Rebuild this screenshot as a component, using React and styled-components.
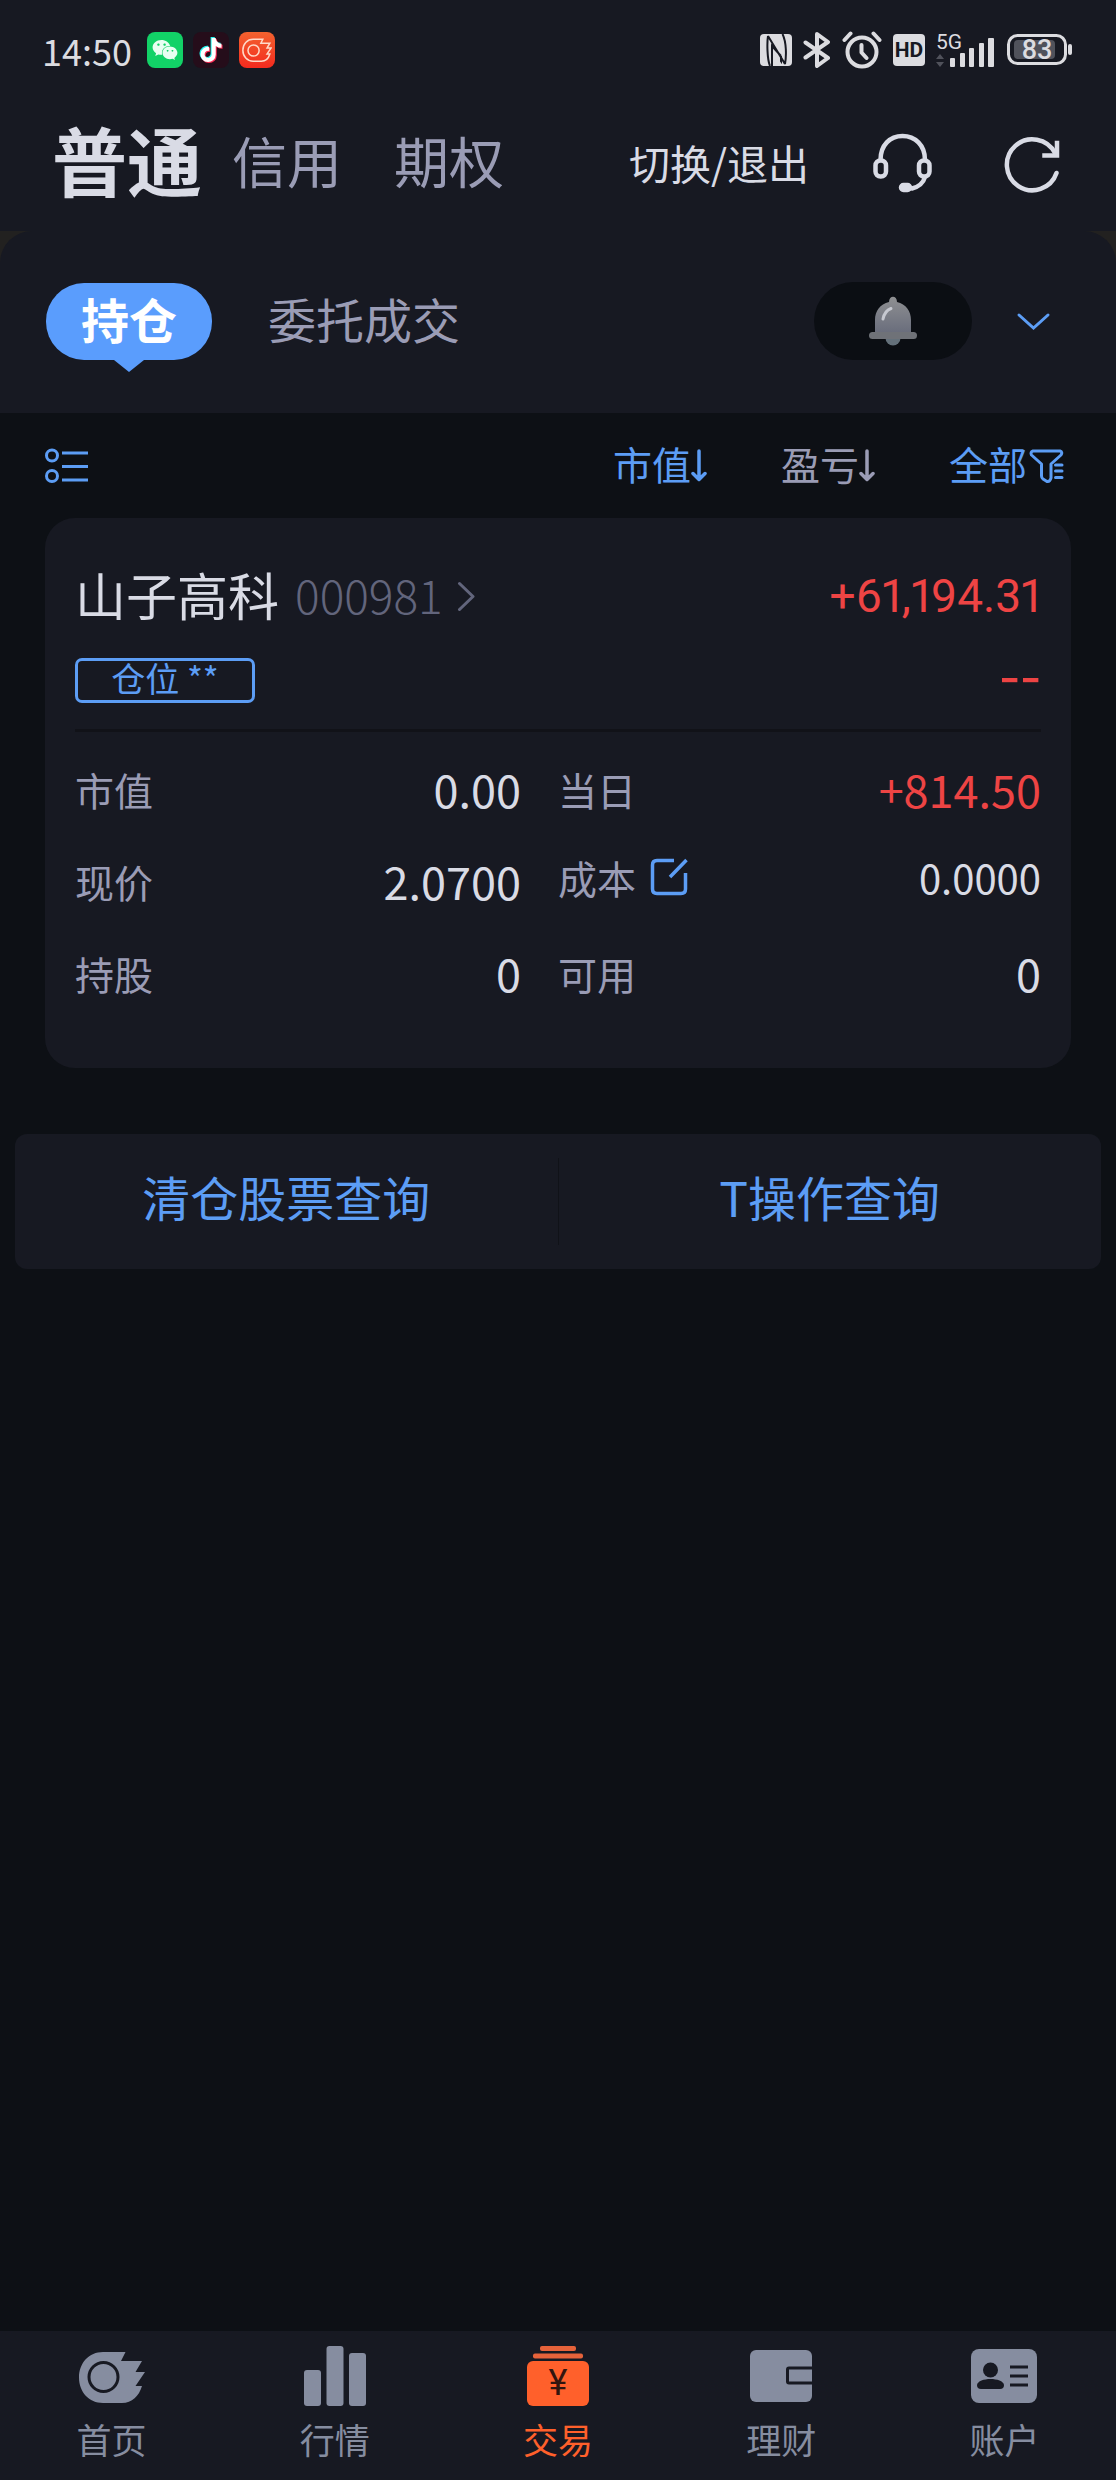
import React from "react";
import styled, { createGlobalStyle } from "styled-components";
import { FaWeixin, FaTiktok } from "react-icons/fa";

const color = {
  page: "#0d1015",
  panel: "#171922",
  corner: "#222120",
  bright: "#d9dbe5",
  muted: "#9a9cb5",
  faint: "#62657c",
  blue: "#5c9df5",
  pill: "#5a9dfd",
  red: "#ee4444",
  nav: "#868da0",
  orange: "#ff602b",
  status: "#dcdce0",
};

const GlobalStyle = createGlobalStyle`
  *, *::before, *::after { box-sizing: border-box; }
  body {
    margin: 0;
    background: ${color.page};
    font-family: "Noto Sans CJK SC", "Noto Sans", sans-serif;
  }
  button {
    margin: 0;
    padding: 0;
    border: 0;
    background: none;
    color: inherit;
    font: inherit;
    cursor: pointer;
  }
  svg { display: block; flex: none; }
`;

const Page = styled.div`
  display: flex;
  flex-direction: column;
  min-height: 100vh;
  background: ${color.page};
  color: ${color.bright};
`;

const StatusBar = styled.div`
  display: flex;
  align-items: center;
  justify-content: space-between;
  height: 100px;
  padding: 0 43px 0 42px;
  background: ${color.panel};
  color: ${color.status};
`;

const StatusGroup = styled.div`
  display: flex;
  align-items: center;
  gap: ${(p) => p.$gap}px;
`;

const Clock = styled.span`
  margin-right: 5px;
  font-size: 36px;
  line-height: 44px;
`;

const AppBadge = styled.span`
  display: flex;
  align-items: center;
  justify-content: center;
  width: 36px;
  height: 36px;
  border-radius: 8px;
  background: ${(p) => p.$fill};
  color: #e9fff2;
`;

const HdBadge = styled.span`
  width: 32px;
  height: 32px;
  border-radius: 4px;
  background: ${color.status};
  color: ${color.panel};
  font: 700 21px/32px Roboto, sans-serif;
  text-align: center;
`;

const Header = styled.header`
  display: flex;
  align-items: center;
  justify-content: space-between;
  height: 131px;
  padding: 0 51px 8px 52px;
  background: ${color.panel};
`;

const AccountTabs = styled.nav`
  display: flex;
  align-items: center;
  gap: 30px;
  padding-bottom: 5px;
`;

const AccountTab = styled.button`
  padding-right: ${(p) => (p.$active ? 0 : 22)}px;
  color: ${(p) => (p.$active ? color.bright : color.muted)};
  font-size: ${(p) => (p.$active ? 75 : 55)}px;
  font-weight: ${(p) => (p.$active ? 700 : 400)};
  line-height: 80px;
`;

const HeaderActions = styled.div`
  display: flex;
  align-items: center;
  gap: 64px;
`;

const SwitchButton = styled.button`
  font-size: 41px;
  line-height: 60px;
`;

const PanelBackdrop = styled.div`
  background: ${color.corner};
`;

const TabPanel = styled.section`
  display: flex;
  align-items: center;
  height: 182px;
  padding: 0 58px 2px 46px;
  border-radius: 32px 32px 0 0;
  background: ${color.panel};
`;

const ActiveTab = styled.button`
  position: relative;
  width: 166px;
  height: 77px;
  padding-bottom: 7px;
  border-radius: 38px;
  background: ${color.pill};
  color: #fff;
  font-size: 48px;
  font-weight: 700;
  line-height: 70px;

  &::after {
    content: "";
    position: absolute;
    top: 100%;
    left: 50%;
    margin-left: -15px;
    border: 15px solid transparent;
    border-top: 12px solid ${color.pill};
    border-bottom: 0;
  }
`;

const PlainTab = styled.button`
  margin: 0 auto 0 56px;
  padding-bottom: 7px;
  color: ${color.muted};
  font-size: 48px;
  line-height: 70px;
`;

const BellButton = styled.button`
  display: flex;
  align-items: center;
  justify-content: center;
  width: 158px;
  height: 78px;
  border-radius: 39px;
  background: #0b0e13;
`;

const ExpandButton = styled.button`
  margin-left: 38px;
`;

const FilterBar = styled.div`
  display: flex;
  align-items: center;
  gap: 74px;
  height: 105px;
  padding: 0 51px 0 44px;
`;

const ListButton = styled.button`
  margin-right: auto;
`;

const FilterButton = styled.button`
  display: flex;
  align-items: center;
  gap: ${(p) => p.$gap || 0}px;
  color: ${(p) => (p.$active ? color.blue : color.muted)};
  font-size: 39px;
  line-height: 54px;
`;

const FilterText = styled.span`
  padding-bottom: 6px;
`;

const Card = styled.article`
  margin: 0 45px;
  padding: 46px 30px 49px;
  border-radius: 30px;
  background: ${color.panel};
`;

const CardRow = styled.div`
  display: flex;
  align-items: center;
  justify-content: space-between;
`;

const StockLink = styled.a`
  display: flex;
  align-items: center;
  color: ${color.bright};
  font-size: 51px;
  line-height: 64px;
  text-decoration: none;
`;

const StockName = styled.span`
  padding-bottom: 3px;
  line-height: 61px;
`;

const StockCode = styled(StockName)`
  margin: 0 14px 0 16px;
  color: ${color.faint};
  font-size: 46px;
  font-weight: 300;
`;

const Profit = styled.span`
  color: ${color.red};
  font-family: Roboto, "Noto Sans", sans-serif;
  font-size: 46px;
  font-variant-numeric: proportional-nums;
  line-height: 64px;
`;

const TagRow = styled(CardRow)`
  height: 45px;
  margin: 30px 0 26px;
`;

const PositionTag = styled.span`
  width: 180px;
  height: 45px;
  border: 3px solid ${color.blue};
  border-radius: 7px;
  color: ${color.blue};
  font-size: 34px;
  line-height: 34px;
  text-align: center;
`;

const ProfitRate = styled.span`
  padding-bottom: 20px;
  color: ${color.red};
  font-size: 60px;
  line-height: 45px;
`;

const Metrics = styled.dl`
  display: grid;
  grid-template-columns: 1fr 1fr;
  margin: 0;
  padding-top: 11px;
  border-top: 3px solid #111218;
`;

const Metric = styled.div`
  display: flex;
  align-items: center;
  justify-content: space-between;
  height: 92px;
  padding: 0 ${(p) => (p.$left ? 37 : 0)}px ${(p) => (p.$raised ? 8 : 0)}px 0;
`;

const MetricLabel = styled.dt`
  display: flex;
  align-items: center;
  gap: 14px;
  color: ${color.muted};
  font-size: 39px;
  line-height: 56px;
`;

const MetricValue = styled.dd`
  margin: 0;
  color: ${(p) => (p.$gain ? color.red : color.bright)};
  font-size: ${(p) => (p.$small ? 40 : 45)}px;
  line-height: 56px;
`;

const QueryBar = styled.div`
  display: flex;
  align-items: center;
  height: 135px;
  margin: 66px 15px 0;
  border-radius: 12px;
  background: ${color.panel};
`;

const QueryButton = styled.button`
  flex: 1;
  height: 87px;
  padding-bottom: 10px;
  color: ${color.blue};
  font-size: 48px;
  line-height: 77px;

  & + & {
    border-left: 1px solid #101218;
  }
`;

const BottomNav = styled.nav`
  display: flex;
  margin-top: auto;
  background: ${color.panel};
`;

const NavItem = styled.a`
  display: flex;
  flex: 1;
  flex-direction: column;
  align-items: center;
  gap: 11px;
  padding: 15px 0 19px;
  color: ${(p) => (p.$active ? color.orange : color.nav)};
  font-size: 35px;
  line-height: 44px;
  text-decoration: none;
`;

const FLAME =
  "M24 0H46.500L42 9H63L56.500 20H66L56.500 34H63C60 44 53 51 43 51H24C10 51 0 40 0 25.500S10 0 24 0Z";

const TiktokLogo = () => (
  <svg width="26" height="28" viewBox="0 0 26 28">
    <FaTiktok x="0" y="1" size={24} color="#25f4ee" />
    <FaTiktok x="2" y="3" size={24} color="#fe2c55" />
    <FaTiktok x="1" y="2" size={24} color="#fff" />
  </svg>
);

const FlameOutline = () => (
  <svg width="30" height="25" viewBox="-2 -2 70 56" fill="none" stroke="#ffd9c8" strokeWidth="3.500">
    <path d={FLAME} />
    <circle cx="25" cy="26" r="13" />
  </svg>
);

const NfcIcon = () => (
  <svg width="32" height="32" viewBox="0 0 32 32" fill="none">
    <rect width="32" height="32" rx="4" fill={color.status} />
    <path d="M8 2C7 8 7 25 10 32M8 2L25 30M12 32V12L21 22M25 30C26.500 22 26.500 8 22.500 0M21 22V30" stroke={color.panel} strokeWidth="2" />
    <path d="M16.500 22.500L22.500 31H16.500Z" fill={color.status} />
  </svg>
);

const BluetoothIcon = () => (
  <svg width="28" height="36" viewBox="0 0 28 36" fill="none" stroke={color.status} strokeWidth="4" strokeLinecap="round" strokeLinejoin="round">
    <path d="M2.500 10.500L25 26L14 34V2L25 10L2.500 25.500" />
  </svg>
);

const AlarmIcon = () => (
  <svg width="40" height="38" viewBox="0 0 40 38" fill="none" stroke={color.status} strokeWidth="4" strokeLinecap="round" strokeLinejoin="round">
    <circle cx="20" cy="21" r="14.500" />
    <path d="M19.500 14V21.500L24.500 27M2.500 9L8.500 2.500M31.500 2.500L37.500 9" />
  </svg>
);

const SignalIcon = () => (
  <svg width="60" height="44" viewBox="0 -4 60 44" fill={color.status}>
    <text x="0" y="17" fontFamily="Roboto, sans-serif" fontSize="21">5G</text>
    <rect x="14" y="26" width="5" height="9" rx="1" />
    <rect x="24" y="21" width="5" height="14" rx="1" />
    <rect x="33" y="16" width="5" height="19" rx="1" />
    <rect x="43" y="11" width="5" height="24" rx="1" />
    <rect x="52" y="6" width="6" height="29" rx="1" />
    <path d="M4 22L8 27H0ZM4 35L8 30H0Z" fill="#50525b" />
  </svg>
);

const BatteryIcon = () => (
  <svg width="66" height="36" viewBox="0 -2 66 36">
    <rect x="1.500" y="1.500" width="57" height="28" rx="9" fill="none" stroke={color.status} strokeWidth="3" />
    <rect x="7" y="6" width="41" height="19" rx="4" fill="#50525b" />
    <rect x="61" y="10" width="4" height="11" rx="2" fill={color.status} />
    <text x="30" y="25" textAnchor="middle" fill={color.status} fontFamily="Roboto, sans-serif" fontSize="27" fontWeight="500">83</text>
  </svg>
);

const HeadsetIcon = () => (
  <svg width="64" height="64" viewBox="0 0 64 64" fill="none" stroke={color.bright} strokeWidth="4.500" strokeLinecap="round">
    <path d="M7.500 30C7.500 15 17 6 29.500 6S52 15 52 30M52 47C50 54 45 57 39 58.500" />
    <rect x="2.500" y="30.500" width="10.500" height="16" rx="5" />
    <rect x="46" y="30.500" width="10.500" height="16" rx="5" />
    <rect x="28" y="55" width="9" height="5" rx="2.500" fill={color.bright} />
  </svg>
);

const RefreshIcon = () => (
  <svg width="64" height="64" viewBox="0 0 64 64" fill="none" stroke={color.bright} strokeWidth="4.500" strokeLinecap="round">
    <path d="M55.500 43A25.500 25.500 0 1 1 54 23" />
    <path d="M56 13V25.500H43.500" strokeLinecap="square" />
  </svg>
);

const BellIcon = () => (
  <svg width="48" height="52" viewBox="0 0 48 52">
    <defs>
      <linearGradient id="bell" x1="0" y1="0" x2="0" y2="1">
        <stop offset="0" stopColor="#8f9092" />
        <stop offset="1" stopColor="#696d7c" />
      </linearGradient>
    </defs>
    <circle cx="24" cy="43" r="7.500" fill="#64707a" />
    <path d="M20 7C20 0 28 0 28 7C37 9 42 16 42 25V38H6V25C6 16 11 9 20 7Z" fill="url(#bell)" />
    <rect x="0" y="37" width="48" height="7" rx="3.500" fill="#6f7278" />
    <path d="M14 24C15 19 18 15 22 13.500" fill="none" stroke="#c6c8d0" strokeWidth="3" strokeLinecap="round" />
  </svg>
);

const ChevronDown = () => (
  <svg width="48" height="48" viewBox="0 0 48 48" fill="none" stroke={color.blue} strokeWidth="3" strokeLinecap="round">
    <path d="M9 18L23.500 31L38 18" />
  </svg>
);

const ListIcon = () => (
  <svg width="45" height="36" viewBox="0 0 45 36" fill="none" stroke={color.blue} strokeWidth="3">
    <circle cx="8" cy="7.500" r="5.500" />
    <circle cx="8" cy="28" r="5.500" />
    <path d="M18 5H44M18 18.500H44M18 32H44" />
  </svg>
);

const SortArrow = () => (
  <svg width="16" height="36" viewBox="0 0 16 36" fill="none" stroke="currentColor" strokeWidth="3.500" strokeLinecap="round" strokeLinejoin="round">
    <path d="M8 3V31M2 25.500L8 31.500L14 25.500" />
  </svg>
);

const FunnelIcon = () => (
  <svg width="36" height="36" viewBox="0 0 36 36" fill="none" stroke={color.blue} strokeWidth="3" strokeLinecap="round" strokeLinejoin="round">
    <path d="M4 3H31Q34 4 32 7L22 16V30Q21 34 18 33.500L14 31Q12.500 30 12.500 28V16L2.500 7Q1 4 4 3ZM26.500 17H33M26.500 23H33M26.500 29.500H33" />
  </svg>
);

const ChevronRight = () => (
  <svg width="18" height="32" viewBox="0 0 18 32" fill="none" stroke={color.faint} strokeWidth="3" strokeLinecap="round" strokeLinejoin="round">
    <path d="M2.500 3.500L16 16.500L2.500 29.500" />
  </svg>
);

const EditIcon = () => (
  <svg width="38" height="38" viewBox="0 0 38 38" fill="none" stroke={color.blue} strokeWidth="3.500">
    <path d="M24 2.500H7Q2.500 2.500 2.500 7V31Q2.500 35.500 7 35.500H31Q35.500 35.500 35.500 31V15M20 19L36.500 2" />
  </svg>
);

const HomeIcon = () => (
  <svg width="66" height="60" viewBox="0 0 66 60" fill={color.nav}>
    <g transform="translate(0 6)">
      <path d={FLAME} />
      <circle cx="24.500" cy="25" r="14.500" fill="none" stroke={color.panel} strokeWidth="3" />
    </g>
  </svg>
);

const MarketIcon = () => (
  <svg width="62" height="60" viewBox="0 0 62 60" fill={color.nav}>
    <rect x="0" y="24" width="17" height="36" rx="3" />
    <rect x="22.500" y="0" width="17" height="60" rx="3" />
    <rect x="45" y="7" width="17" height="53" rx="3" />
  </svg>
);

const TradeIcon = () => (
  <svg width="62" height="60" viewBox="0 0 62 60" fill={color.orange}>
    <rect x="13" y="0" width="36" height="5" rx="2" fill="#e6623a" />
    <rect x="6" y="7.500" width="50" height="5" rx="2" fill="#e6623a" />
    <rect x="0" y="15" width="62" height="45" rx="6" />
    <text x="31" y="49" textAnchor="middle" fill="#32150f" fontFamily="Roboto, sans-serif" fontSize="36">¥</text>
  </svg>
);

const WalletIcon = () => (
  <svg width="62" height="60" viewBox="0 0 62 60">
    <rect x="0" y="4" width="62" height="52" rx="6" fill={color.nav} />
    <path d="M62 22H39Q37.500 22 37.500 23.500V35.500Q37.500 37 39 37H62" fill="none" stroke={color.panel} strokeWidth="3" />
  </svg>
);

const AccountIcon = () => (
  <svg width="66" height="60" viewBox="0 0 66 60" fill={color.panel}>
    <rect x="0" y="3" width="66" height="54" rx="8" fill={color.nav} />
    <circle cx="19.500" cy="24" r="7.500" />
    <path d="M6 39C7 31 32 31 33 39Q33 43 29 43H10Q6 43 6 39Z" />
    <path d="M39 21H57M39 30H57M39 39H57" stroke={color.panel} strokeWidth="3" />
  </svg>
);

const metrics = [
  { label: "市值", value: "0.00" },
  { label: "当日", value: "+814.50", gain: true },
  { label: "现价", value: "2.0700" },
  { label: "成本", value: "0.0000", editable: true },
  { label: "持股", value: "0" },
  { label: "可用", value: "0" },
];

const navItems = [
  { label: "首页", Icon: HomeIcon },
  { label: "行情", Icon: MarketIcon },
  { label: "交易", Icon: TradeIcon, active: true },
  { label: "理财", Icon: WalletIcon },
  { label: "账户", Icon: AccountIcon },
];

export default function App() {
  return (
    <Page>
      <GlobalStyle />
      <StatusBar>
        <StatusGroup $gap={10}>
          <Clock>14:50</Clock>
          <AppBadge $fill="#12d267">
            <FaWeixin size={26} />
          </AppBadge>
          <AppBadge $fill="#250d1a">
            <TiktokLogo />
          </AppBadge>
          <AppBadge $fill="linear-gradient(#f2622f, #f42a1e)">
            <FlameOutline />
          </AppBadge>
        </StatusGroup>
        <StatusGroup $gap={11}>
          <NfcIcon />
          <BluetoothIcon />
          <AlarmIcon />
          <HdBadge>HD</HdBadge>
          <SignalIcon />
          <BatteryIcon />
        </StatusGroup>
      </StatusBar>

      <Header>
        <AccountTabs>
          <AccountTab type="button" $active>普通</AccountTab>
          <AccountTab type="button">信用</AccountTab>
          <AccountTab type="button">期权</AccountTab>
        </AccountTabs>
        <HeaderActions>
          <SwitchButton type="button">切换/退出</SwitchButton>
          <button type="button" aria-label="客服"><HeadsetIcon /></button>
          <button type="button" aria-label="刷新"><RefreshIcon /></button>
        </HeaderActions>
      </Header>

      <PanelBackdrop>
        <TabPanel>
          <ActiveTab type="button">持仓</ActiveTab>
          <PlainTab type="button">委托成交</PlainTab>
          <BellButton type="button" aria-label="提醒"><BellIcon /></BellButton>
          <ExpandButton type="button" aria-label="展开"><ChevronDown /></ExpandButton>
        </TabPanel>
      </PanelBackdrop>

      <main>
        <FilterBar>
          <ListButton type="button" aria-label="列表"><ListIcon /></ListButton>
          <FilterButton type="button" $active><FilterText>市值</FilterText><SortArrow /></FilterButton>
          <FilterButton type="button"><FilterText>盈亏</FilterText><SortArrow /></FilterButton>
          <FilterButton type="button" $active $gap={2}><FilterText>全部</FilterText><FunnelIcon /></FilterButton>
        </FilterBar>

        <Card>
          <CardRow>
            <StockLink href="#000981">
              <StockName>山子高科</StockName>
              <StockCode>000981</StockCode>
              <ChevronRight />
            </StockLink>
            <Profit>+61,194.31</Profit>
          </CardRow>
          <TagRow>
            <PositionTag>仓位 **</PositionTag>
            <ProfitRate>--</ProfitRate>
          </TagRow>
          <Metrics>
            {metrics.map((m, i) => (
              <Metric key={m.label} $left={i % 2 === 0} $raised={m.editable}>
                <MetricLabel>
                  {m.label}
                  {m.editable && (
                    <button type="button" aria-label="修改成本"><EditIcon /></button>
                  )}
                </MetricLabel>
                <MetricValue $gain={m.gain} $small={m.editable}>{m.value}</MetricValue>
              </Metric>
            ))}
          </Metrics>
        </Card>

        <QueryBar>
          <QueryButton type="button">清仓股票查询</QueryButton>
          <QueryButton type="button">T操作查询</QueryButton>
        </QueryBar>
      </main>

      <BottomNav>
        {navItems.map(({ label, Icon, active }) => (
          <NavItem key={label} href={`#${label}`} $active={active}>
            <Icon />
            {label}
          </NavItem>
        ))}
      </BottomNav>
    </Page>
  );
}
